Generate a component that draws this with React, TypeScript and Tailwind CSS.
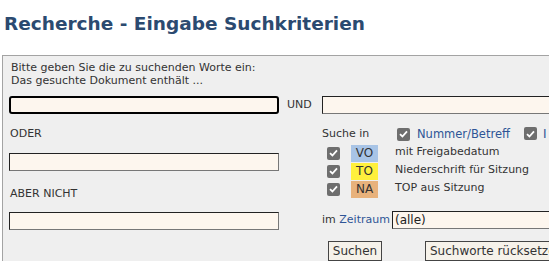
import React from 'react';

const font = { fontFamily: '"DejaVu Sans", Verdana, sans-serif' };

const Check: React.FC = () => (
  <span className="inline-flex w-[13px] h-[13px] items-center justify-center rounded-[2px] bg-[#6e6e6e]">
    <svg width="9" height="8" viewBox="0 0 9 8">
      <path d="M1 4.2 L3.4 6.5 L8 1.3" fill="none" stroke="white" strokeWidth="1.8" />
    </svg>
  </span>
);

const Field: React.FC<{ className?: string; focused?: boolean; value?: string }> = ({ className = '', focused, value }) => (
  <div
    className={`h-[18px] bg-[#fdf6ee] text-[12px] leading-[16px] pl-[2px] text-[#222] ${
      focused
        ? 'border-2 border-black rounded-[3px]'
        : 'border border-t-[#222] border-l-[#222] border-b-[#777] border-r-[#777]'
    } ${className}`}
  >
    {value}
  </div>
);

const Badge: React.FC<{ label: string; color: string }> = ({ label, color }) => (
  <span className={`inline-flex w-[27px] h-[17px] items-center justify-center text-[12px] text-[#333] ${color}`}>
    {label}
  </span>
);

export default function App() {
  return (
    <div className="w-[549px] h-[261px] overflow-hidden bg-white text-[#333]" style={font}>
      <div className="h-[55px] pl-[4px] pt-[12px]">
        <h1 className="text-[18.5px] leading-[24px] font-bold text-[#2b4a70]">Recherche - Eingabe Suchkriterien</h1>
      </div>
      <div className="ml-[2px] h-[206px] border-t border-l border-[#a3a3a3] bg-[#efefef] text-[11px] leading-[12px]">
        <div className="pl-[8px] pt-[6px] leading-[12.5px]">
          <p>Bitte geben Sie die zu suchenden Worte ein:</p>
          <p>Das gesuchte Dokument enthält ...</p>
        </div>
        <div className="flex mt-[9px]">
          <div className="w-[277px] pl-[6px] flex flex-col">
            <Field focused className="w-[270px]" />
            <p className="mt-[14px] pl-[1px]">ODER</p>
            <Field className="mt-[13px] w-[270px]" />
            <p className="mt-[17px] pl-[1px]">ABER NICHT</p>
            <Field className="mt-[12px] w-[270px]" />
          </div>
          <div className="flex-1 flex flex-col">
            <div className="flex items-center">
              <span className="w-[43px] pl-[8px] text-[11px]">UND</span>
              <Field className="flex-1" />
            </div>
            <div className="flex items-center mt-[13px] pl-[43px] h-[14px]">
              <span className="w-[75px]">Suche in</span>
              <Check />
              <span className="ml-[7px] text-[11.5px] text-[#2e5596]">Nummer/Betreff</span>
              <span className="ml-[14px]"><Check /></span>
              <span className="ml-[6px] text-[12px] text-[#2e5596]">I</span>
            </div>
            <div className="flex flex-col pl-[48px] mt-[3px]">
              <div className="flex items-center h-[18px]">
                <Check />
                <span className="ml-[11px]"><Badge label="VO" color="bg-[#a8c4e6] text-[#2e5596]" /></span>
                <span className="ml-[17px] -mt-[3px]">mit Freigabedatum</span>
              </div>
              <div className="flex items-center h-[18px]">
                <Check />
                <span className="ml-[11px]"><Badge label="TO" color="bg-[#fff03c]" /></span>
                <span className="ml-[17px] -mt-[3px]">Niederschrift für Sitzung</span>
              </div>
              <div className="flex items-center h-[18px]">
                <Check />
                <span className="ml-[11px]"><Badge label="NA" color="bg-[#e8b27c]" /></span>
                <span className="ml-[17px] -mt-[3px]">TOP aus Sitzung</span>
              </div>
            </div>
            <div className="flex items-center mt-[13px] pl-[43px]">
              <span className="w-[70px]">
                im <span className="text-[#2e5596]">Zeitraum</span>
              </span>
              <Field className="flex-1" value="(alle)" />
            </div>
            <div className="flex mt-[12px] pl-[49px]">
              <button className="h-[20px] w-[54px] border border-[#444] bg-[#f6f2ea] text-[12px] leading-[18px]">Suchen</button>
              <button className="ml-[43px] h-[20px] px-[4px] border border-[#444] bg-[#f6f2ea] text-[12px] leading-[18px] whitespace-nowrap">
                Suchworte rücksetzen
              </button>
            </div>
          </div>
        </div>
      </div>
    </div>
  );
}
